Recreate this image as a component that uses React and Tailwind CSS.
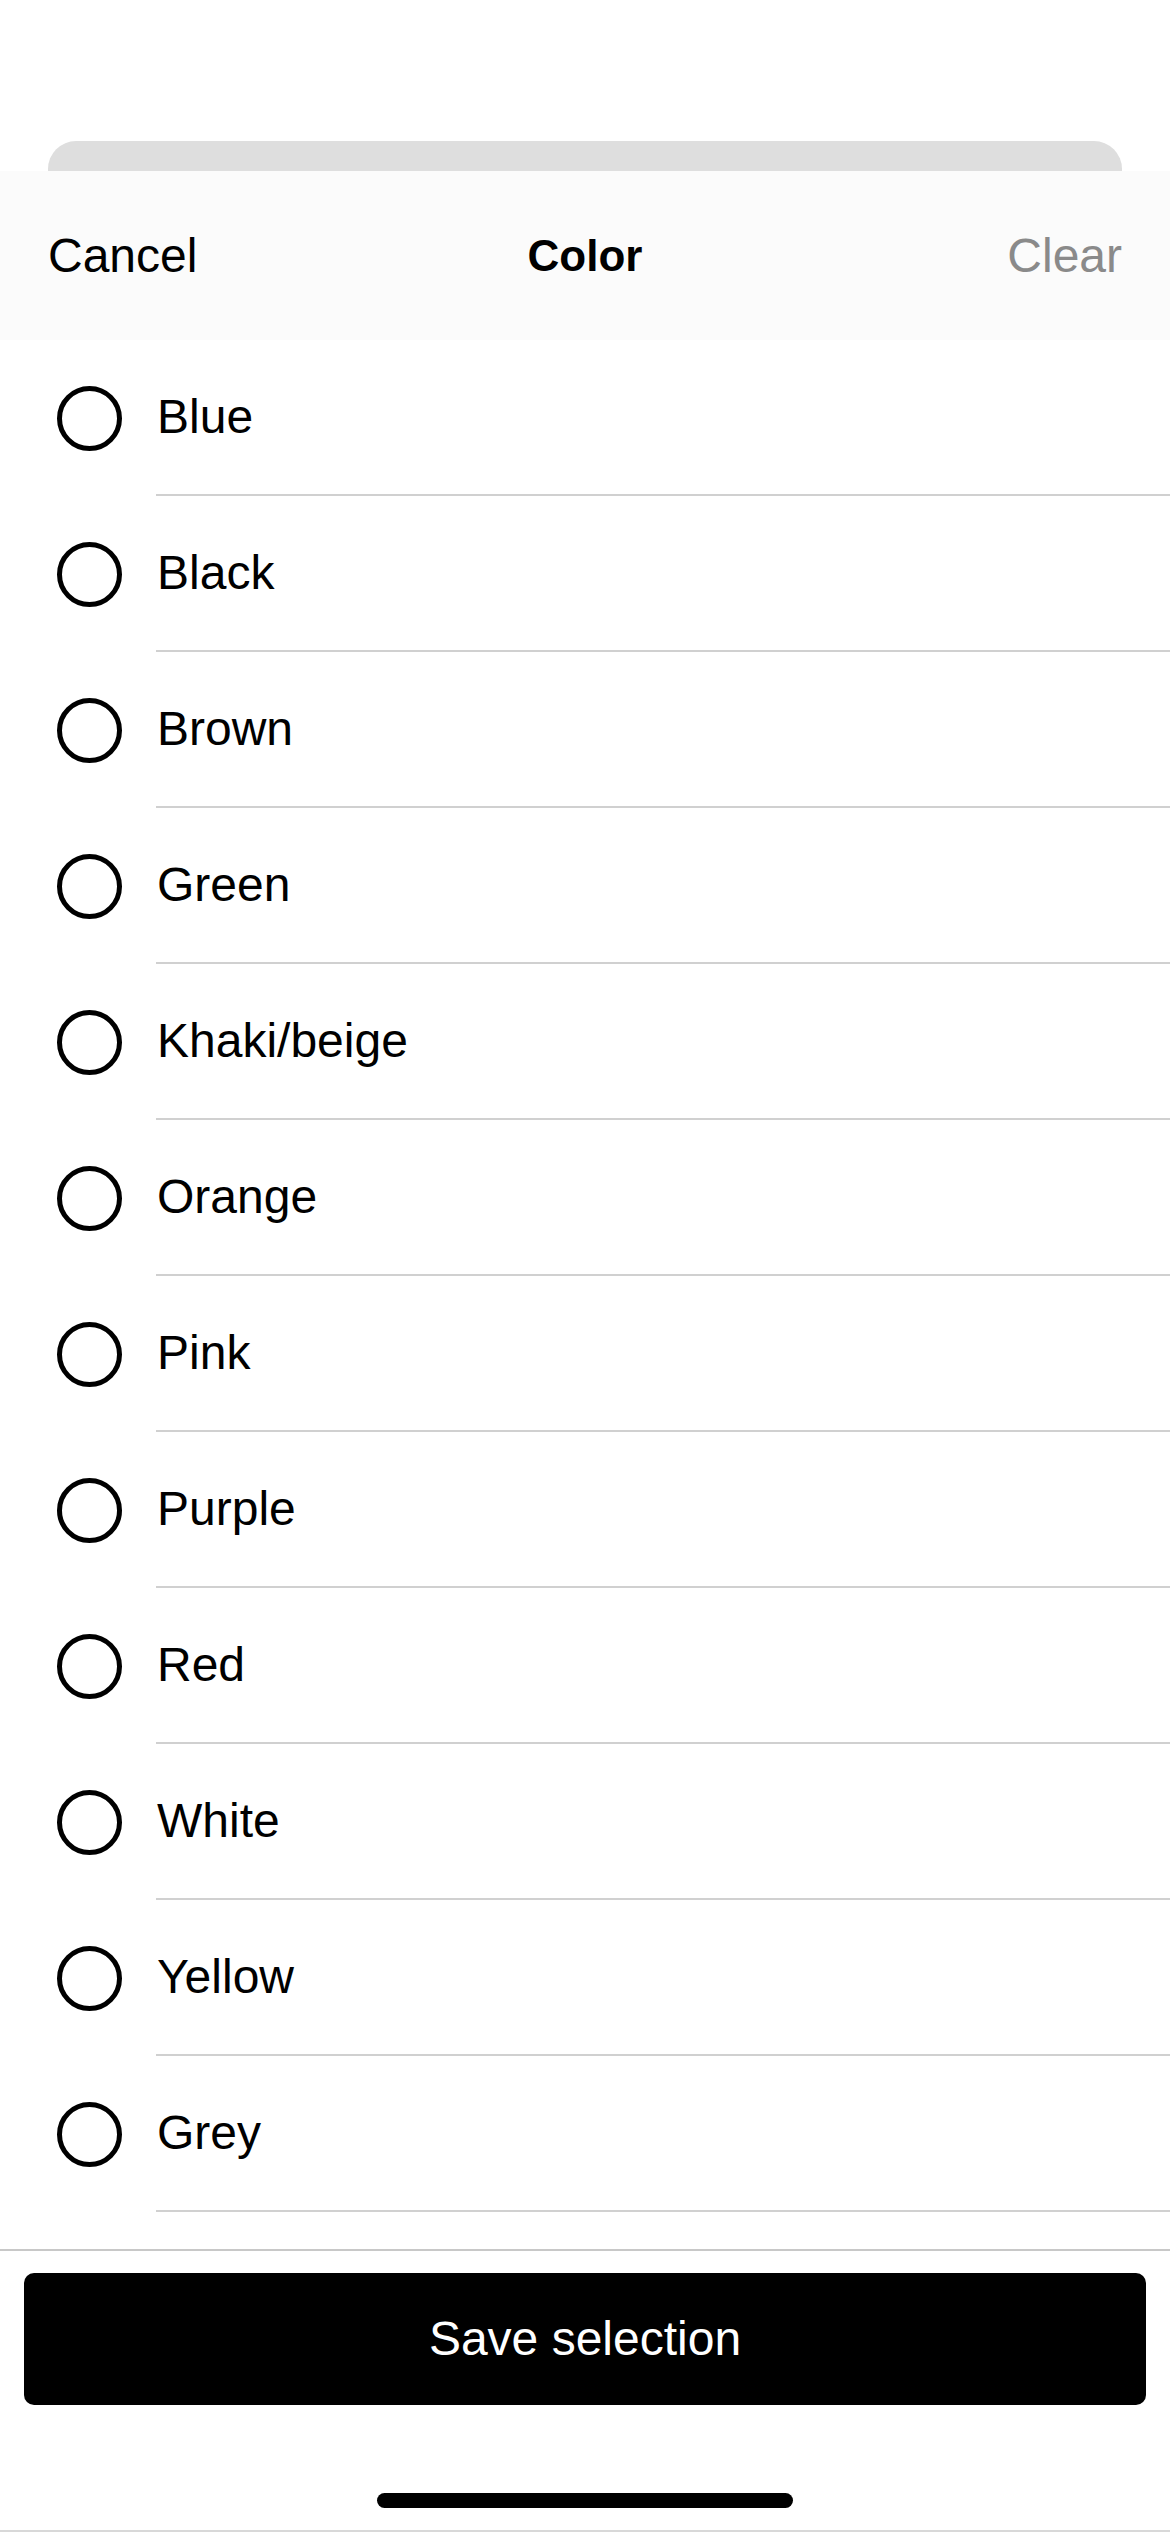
import React, { useState } from "react";

const COLORS = [
  "Blue",
  "Black",
  "Brown",
  "Green",
  "Khaki/beige",
  "Orange",
  "Pink",
  "Purple",
  "Red",
  "White",
  "Yellow",
  "Grey",
];

function ColorRow({ label, checked, onToggle }) {
  return (
    <div className="flex h-[156px] cursor-pointer" onClick={onToggle}>
      <div className="flex w-[156px] shrink-0 items-center pl-[57px]">
        <div className="flex h-[65px] w-[65px] items-center justify-center rounded-full border-[5px] border-black">
          {checked && <div className="h-[35px] w-[35px] rounded-full bg-black" />}
        </div>
      </div>
      <div className="flex flex-1 items-center border-b-2 border-[#d0d0d0] pl-[1px] text-[48px] text-black">
        {label}
      </div>
    </div>
  );
}

export default function App() {
  const [selected, setSelected] = useState([]);

  const toggle = (c) =>
    setSelected((prev) => (prev.includes(c) ? prev.filter((x) => x !== c) : [...prev, c]));

  return (
    <div
      className="flex min-h-[2532px] w-[1170px] flex-col bg-white"
      style={{ fontFamily: '"Liberation Sans", Arial, sans-serif' }}
    >
      <div className="h-[141px]" />
      <div className="mx-[48px] h-[30px] rounded-t-[28px] bg-[#dedede]" />

      <header className="grid h-[169px] grid-cols-3 items-center bg-[#fbfbfb] px-[48px] text-[48px]">
        <button className="justify-self-start text-black">Cancel</button>
        <h1 className="justify-self-center text-[44px] font-bold text-black">Color</h1>
        <button className="justify-self-end text-[#8a8a8a]" onClick={() => setSelected([])}>
          Clear
        </button>
      </header>

      <div className="flex flex-col">
        {COLORS.map((c) => (
          <ColorRow key={c} label={c} checked={selected.includes(c)} onToggle={() => toggle(c)} />
        ))}
      </div>

      <div className="h-[37px]" />
      <div className="border-t-2 border-[#c8c8c8] px-[24px] pt-[22px]">
        <button className="flex h-[132px] w-full items-center justify-center rounded-[10px] bg-black text-[48px] text-white">
          Save selection
        </button>
      </div>

      <div className="flex flex-1 items-end justify-center border-b-2 border-[#d8d8d8] pb-[22px]">
        <div className="h-[15px] w-[416px] rounded-full bg-black" />
      </div>
    </div>
  );
}
